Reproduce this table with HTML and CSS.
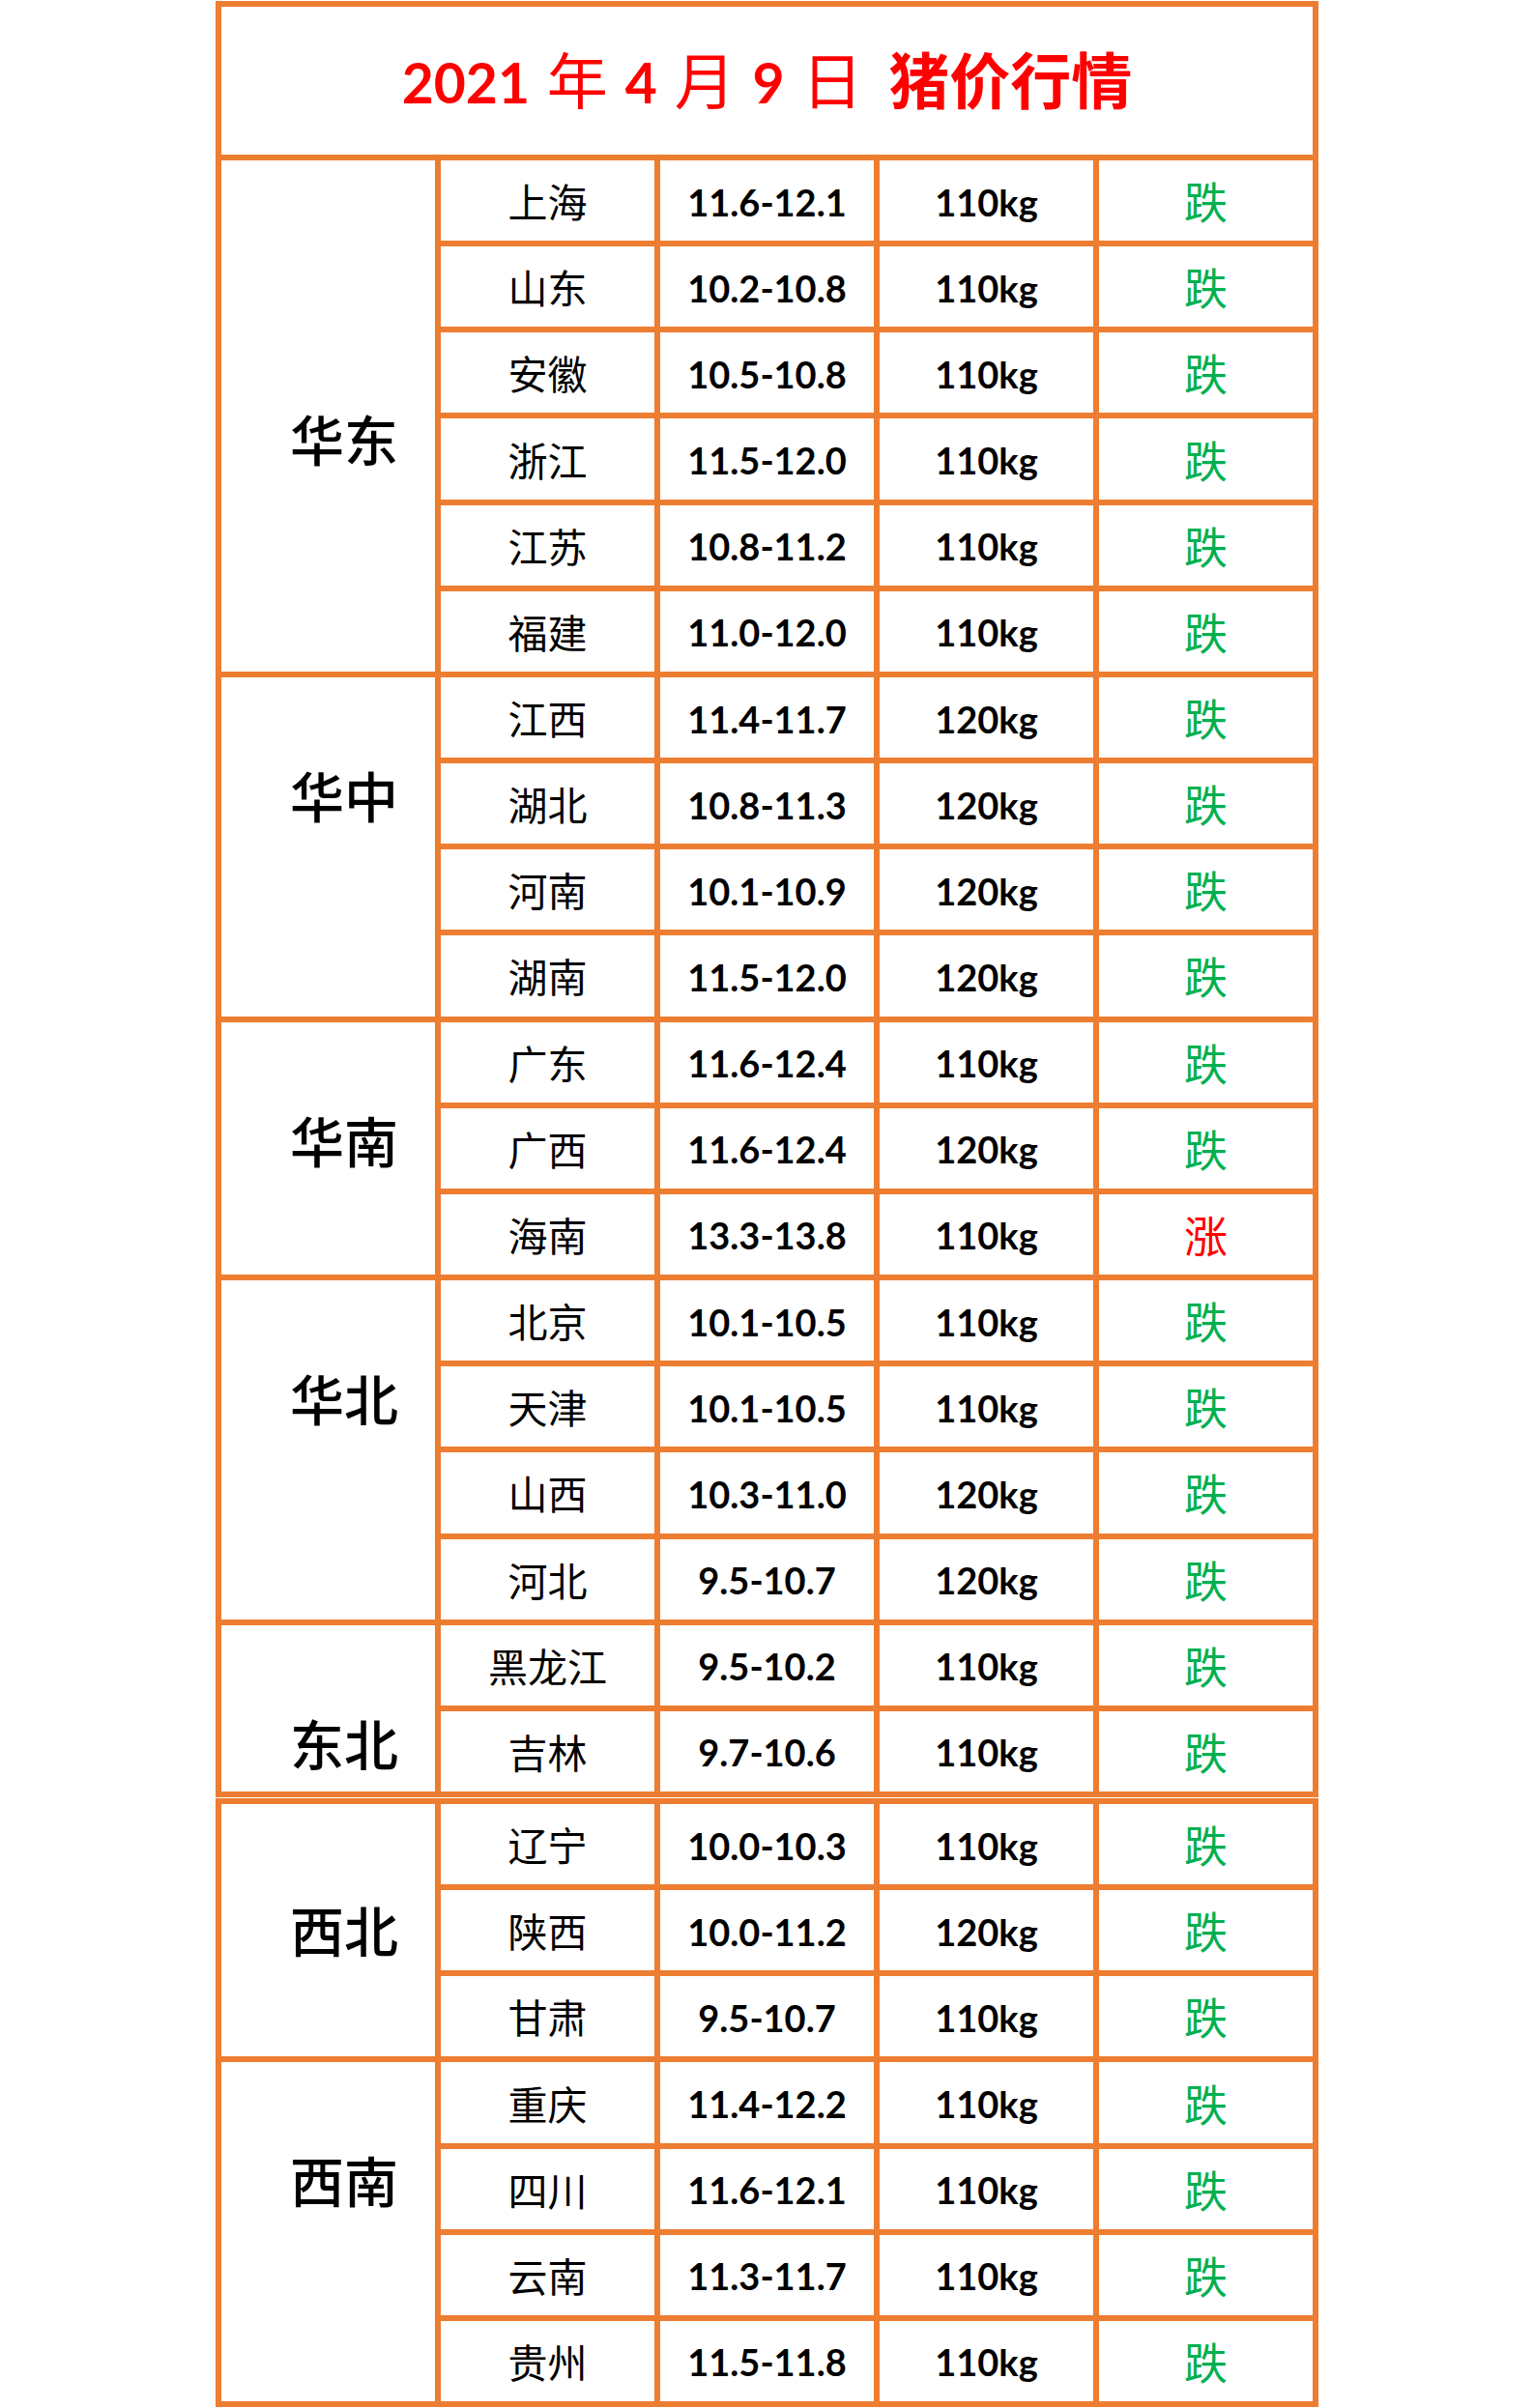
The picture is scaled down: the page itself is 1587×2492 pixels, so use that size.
FILE: index.html
```html
<!DOCTYPE html>
<html lang="zh-CN">
<head>
<meta charset="utf-8">
<title>2021年4月9日 猪价行情</title>
<link rel="stylesheet" href="styles.css">
</head>
<body>
<main class="sheet">
  <section class="grid grid--first">
    <div class="cell title"><h1 class="title__text"><span class="num">2021</span> <span class="cjk">年</span> <span class="num">4</span> <span class="cjk">月</span> <span class="num">9</span> <span class="cjk">日</span> <span class="cjk cjk--bold title__name">猪价行情</span></h1></div>

    <div class="cell region region--span6 region--east">华东</div>
    <div class="cell prov">上海</div><div class="cell num-cell">11.6-12.1</div><div class="cell num-cell">110kg</div><div class="cell trend trend--down">跌</div>
    <div class="cell prov">山东</div><div class="cell num-cell">10.2-10.8</div><div class="cell num-cell">110kg</div><div class="cell trend trend--down">跌</div>
    <div class="cell prov">安徽</div><div class="cell num-cell">10.5-10.8</div><div class="cell num-cell">110kg</div><div class="cell trend trend--down">跌</div>
    <div class="cell prov">浙江</div><div class="cell num-cell">11.5-12.0</div><div class="cell num-cell">110kg</div><div class="cell trend trend--down">跌</div>
    <div class="cell prov">江苏</div><div class="cell num-cell">10.8-11.2</div><div class="cell num-cell">110kg</div><div class="cell trend trend--down">跌</div>
    <div class="cell prov">福建</div><div class="cell num-cell">11.0-12.0</div><div class="cell num-cell">110kg</div><div class="cell trend trend--down">跌</div>

    <div class="cell region region--span4">华中</div>
    <div class="cell prov">江西</div><div class="cell num-cell">11.4-11.7</div><div class="cell num-cell">120kg</div><div class="cell trend trend--down">跌</div>
    <div class="cell prov">湖北</div><div class="cell num-cell">10.8-11.3</div><div class="cell num-cell">120kg</div><div class="cell trend trend--down">跌</div>
    <div class="cell prov">河南</div><div class="cell num-cell">10.1-10.9</div><div class="cell num-cell">120kg</div><div class="cell trend trend--down">跌</div>
    <div class="cell prov">湖南</div><div class="cell num-cell">11.5-12.0</div><div class="cell num-cell">120kg</div><div class="cell trend trend--down">跌</div>

    <div class="cell region region--span3">华南</div>
    <div class="cell prov">广东</div><div class="cell num-cell">11.6-12.4</div><div class="cell num-cell">110kg</div><div class="cell trend trend--down">跌</div>
    <div class="cell prov">广西</div><div class="cell num-cell">11.6-12.4</div><div class="cell num-cell">120kg</div><div class="cell trend trend--down">跌</div>
    <div class="cell prov">海南</div><div class="cell num-cell">13.3-13.8</div><div class="cell num-cell">110kg</div><div class="cell trend trend--up">涨</div>

    <div class="cell region region--span4">华北</div>
    <div class="cell prov">北京</div><div class="cell num-cell">10.1-10.5</div><div class="cell num-cell">110kg</div><div class="cell trend trend--down">跌</div>
    <div class="cell prov">天津</div><div class="cell num-cell">10.1-10.5</div><div class="cell num-cell">110kg</div><div class="cell trend trend--down">跌</div>
    <div class="cell prov">山西</div><div class="cell num-cell">10.3-11.0</div><div class="cell num-cell">120kg</div><div class="cell trend trend--down">跌</div>
    <div class="cell prov">河北</div><div class="cell num-cell">9.5-10.7</div><div class="cell num-cell">120kg</div><div class="cell trend trend--down">跌</div>

    <div class="cell region region--span2">东北</div>
    <div class="cell prov">黑龙江</div><div class="cell num-cell">9.5-10.2</div><div class="cell num-cell">110kg</div><div class="cell trend trend--down">跌</div>
    <div class="cell prov">吉林</div><div class="cell num-cell">9.7-10.6</div><div class="cell num-cell">110kg</div><div class="cell trend trend--down">跌</div>
  </section>

  <section class="grid grid--second">
    <div class="cell region"></div>
    <div class="cell prov">辽宁</div><div class="cell num-cell">10.0-10.3</div><div class="cell num-cell">110kg</div><div class="cell trend trend--down">跌</div>

    <div class="cell region region--span2 region--northwest">西北</div>
    <div class="cell prov">陕西</div><div class="cell num-cell">10.0-11.2</div><div class="cell num-cell">120kg</div><div class="cell trend trend--down">跌</div>
    <div class="cell prov">甘肃</div><div class="cell num-cell">9.5-10.7</div><div class="cell num-cell">110kg</div><div class="cell trend trend--down">跌</div>

    <div class="cell region region--span4">西南</div>
    <div class="cell prov">重庆</div><div class="cell num-cell">11.4-12.2</div><div class="cell num-cell">110kg</div><div class="cell trend trend--down">跌</div>
    <div class="cell prov">四川</div><div class="cell num-cell">11.6-12.1</div><div class="cell num-cell">110kg</div><div class="cell trend trend--down">跌</div>
    <div class="cell prov">云南</div><div class="cell num-cell">11.3-11.7</div><div class="cell num-cell">110kg</div><div class="cell trend trend--down">跌</div>
    <div class="cell prov">贵州</div><div class="cell num-cell">11.5-11.8</div><div class="cell num-cell">110kg</div><div class="cell trend trend--down">跌</div>
  </section>
</main>
</body>
</html>
```

FILE: styles.css
```css
* {
  box-sizing: border-box;
}

html, body {
  margin: 0;
  padding: 0;
  background: #ffffff;
}

body {
  font-family: "Noto Sans CJK SC", sans-serif;
  color: #000000;
}

.sheet {
  padding-top: 1px;
  display: flex;
  flex-direction: column;
  align-items: center;
  gap: 1px;
}

.grid {
  display: grid;
  grid-template-columns: repeat(5, 221px);
  grid-auto-rows: 83.16px;
  gap: 6px;
  padding: 6px;
  background: #ed7d31;
}

.grid--first {
  grid-template-rows: 153px;
}

.cell {
  background: #ffffff;
  display: flex;
  align-items: center;
  justify-content: center;
  line-height: 1;
}

/* Title */
.title {
  grid-column: 1 / -1;
  padding-bottom: 6px;
}

.title__text {
  margin: 0;
  color: #ff0000;
  font-family: "Lato", "Noto Sans CJK SC", sans-serif;
  font-weight: 700;
  font-size: 57px;
  line-height: 1;
  white-space: pre;
  word-spacing: 4px;
}

.title__text .cjk {
  font-family: "Noto Sans CJK SC", sans-serif;
  font-size: 63px;
  font-weight: 400;
}

.title__text .cjk--bold {
  font-weight: 700;
}

.title__name {
  margin-left: 9px;
}

/* Region column */
.region {
  grid-column: 1;
  display: block;
  padding-left: 71px;
  padding-top: 93px;
  font-size: 56px;
  font-weight: 500;
}

.region--span2 { grid-row: span 2; }
.region--span3 { grid-row: span 3; }
.region--span4 { grid-row: span 4; }
.region--span6 { grid-row: span 6; }

.region--east {
  padding-top: 259px;
}

.region--northwest {
  padding-top: 12px;
}

/* Data cells */
.prov {
  font-size: 41px;
  font-weight: 400;
}

.num-cell {
  font-family: "Lato", sans-serif;
  font-weight: 700;
  font-size: 38px;
  padding-top: 2px;
}

.trend {
  font-size: 45px;
  font-weight: 400;
}

.trend--down {
  color: #00b050;
}

.trend--up {
  color: #ff0000;
}
```
